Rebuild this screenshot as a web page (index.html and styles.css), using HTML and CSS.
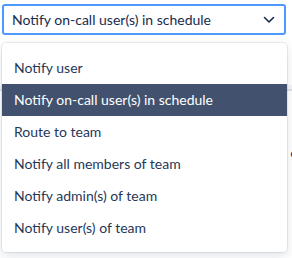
FILE: index.html
```html
<!DOCTYPE html>
<html lang="en">
<head>
    <meta charset="UTF-8">
    <title>Escalation step type</title>
    <link rel="stylesheet" href="styles.css">
</head>
<body>
    <div class="select">
        <span class="select-value">Notify on-call user(s) in schedule</span>
        <svg class="chevron" width="12" height="8" viewBox="0 0 12 8" xmlns="http://www.w3.org/2000/svg">
            <path d="M1.5 1.5 L6 6 L10.5 1.5" fill="none" stroke="#172B4D" stroke-width="1.6" stroke-linecap="round" stroke-linejoin="round"/>
        </svg>
    </div>

    <!-- Table that sits behind the open menu -->
    <div class="backdrop">
        <div class="backdrop-head"></div>
        <div class="backdrop-row">
            <span class="cell-left">E</span>
            <span class="cell-right">e</span>
        </div>
    </div>

    <ul class="menu">
        <li class="menu-item">Notify user</li>
        <li class="menu-item selected">Notify on-call user(s) in schedule</li>
        <li class="menu-item">Route to team</li>
        <li class="menu-item">Notify all members of team</li>
        <li class="menu-item">Notify admin(s) of team</li>
        <li class="menu-item">Notify user(s) of team</li>
    </ul>
</body>
</html>
```

FILE: styles.css
```css
body {
    margin: 0;
    position: relative;
    height: 258px;
    overflow: hidden;
    background-color: #fff;
    font-family: Lato, "Noto Sans", sans-serif;
    font-size: 14px;
    color: #172B4D;
}
.select {
    display: flex;
    align-items: center;
    justify-content: space-between;
    box-sizing: border-box;
    height: 31px;
    margin: 4px 6px 0 2px;
    padding: 0 8px 0 8px;
    border: 2px solid #4C9AFF;
    border-radius: 3px;
}
.select-value {
    line-height: 20px;
}
.chevron {
    margin-right: 1px;
}
.backdrop {
    padding-top: 50px;
}
.backdrop-head {
    height: 4px;
    border-bottom: 2px solid #DFE1E6;
    background-color: #F4F5F7;
}
.backdrop-row {
    display: flex;
    justify-content: space-between;
    margin: 52px -6px 0 -8px;
    font-weight: bold;
    line-height: 20px;
}
.menu {
    position: absolute;
    top: 43px;
    left: 2px;
    width: 285px;
    margin: 0;
    padding: 9px 0 8px;
    list-style: none;
    background-color: #fff;
    border-radius: 4px;
    box-shadow: 0 0 0 1px rgba(9, 30, 66, 0.08), 0 4px 11px rgba(9, 30, 66, 0.12);
}
.menu-item {
    height: 32px;
    line-height: 32px;
    padding-left: 12px;
    color: #253858;
}
.menu-item.selected {
    background-color: #42526E;
    color: #fff;
}
```
